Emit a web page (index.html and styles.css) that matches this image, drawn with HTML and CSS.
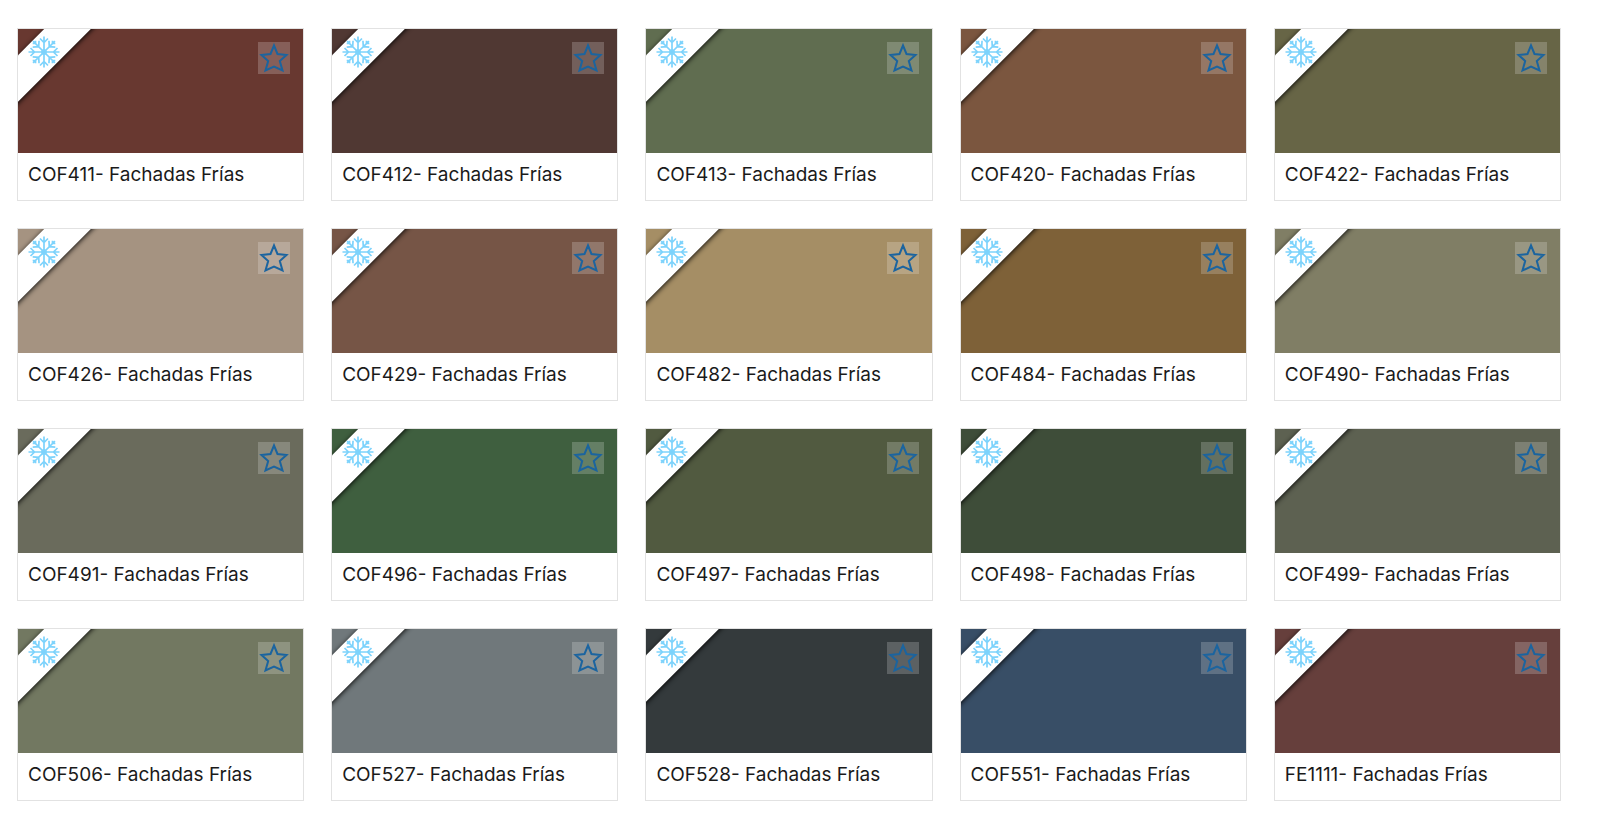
FILE: index.html
```
<!DOCTYPE html>
<html lang="es">
<head>
<meta charset="utf-8">
<meta name="viewport" content="width=device-width, initial-scale=1">
<title>Fachadas Frías</title>
<link rel="stylesheet" href="styles.css">
</head>
<body>

<svg class="sprite" aria-hidden="true">
  <symbol id="snowflake" viewBox="-16 -16 32 32">
    <g id="flake-pair">
      <path d="M0 0V-15.500M-4 -13.500L0 -9.500L4 -13.500"/>
      <g transform="rotate(45)">
        <path d="M0 0V-15.500M-4.500 -11.500L0 -7.500L4.500 -11.500M-2 -14L0 -12L2 -14"/>
      </g>
    </g>
    <use href="#flake-pair" transform="rotate(90)"/>
    <use href="#flake-pair" transform="rotate(180)"/>
    <use href="#flake-pair" transform="rotate(270)"/>
    <circle r="2"/>
  </symbol>
  <symbol id="star" viewBox="0 0 32 32">
    <path d="M16 3.500L19.500 12L28.500 13L21.800 19L24.500 28.500L16 24.500L7.500 28.500L10.200 19L3.500 13L12.500 12Z"/>
  </symbol>
</svg>

<main class="color-grid" id="colors"></main>

<template id="color-template">
  <article class="color-card">
    <div class="swatch">
      <span class="ribbon"></span>
      <svg class="snowflake" role="img" aria-label="Fachada fría"><use href="#snowflake"/></svg>
      <button class="favorite" type="button">
        <svg><use href="#star"/></svg>
      </button>
    </div>
    <p class="color-name"></p>
  </article>
</template>

<script src="colors.js"></script>
</body>
</html>
```
FILE: colors.js
```
var colors = [
  { code: "COF411", hex: "#683830" },
  { code: "COF412", hex: "#503833" },
  { code: "COF413", hex: "#606d50" },
  { code: "COF420", hex: "#7b563f" },
  { code: "COF422", hex: "#676546" },
  { code: "COF426", hex: "#a59381" },
  { code: "COF429", hex: "#765546" },
  { code: "COF482", hex: "#a58e65" },
  { code: "COF484", hex: "#7e6138" },
  { code: "COF490", hex: "#807e65" },
  { code: "COF491", hex: "#6a6b5c" },
  { code: "COF496", hex: "#3f5f3f" },
  { code: "COF497", hex: "#515a40" },
  { code: "COF498", hex: "#3e4d39" },
  { code: "COF499", hex: "#5d6151" },
  { code: "COF506", hex: "#727861" },
  { code: "COF527", hex: "#70787b" },
  { code: "COF528", hex: "#343a3c" },
  { code: "COF551", hex: "#384e66" },
  { code: "FE1111", hex: "#663f3c" }
];

var grid = document.getElementById("colors");
var template = document.getElementById("color-template");

for (var i = 0; i < colors.length; i++) {
  var clone = template.content.cloneNode(true);
  var button = clone.querySelector(".favorite");
  clone.querySelector(".swatch").style.backgroundColor = colors[i].hex;
  clone.querySelector(".color-name").textContent = colors[i].code + "- Fachadas Frías";
  button.setAttribute("aria-label", "Favorito " + colors[i].code);
  button.setAttribute("aria-pressed", "false");
  button.addEventListener("click", function() {
    var pressed = this.getAttribute("aria-pressed") == "true";
    this.setAttribute("aria-pressed", String(!pressed));
  });
  grid.appendChild(clone);
}
```
FILE: styles.css
```
* {
  box-sizing: border-box;
}

body {
  margin: 0;
  background-color: white;
  color: #1a1a1a;
  font-family: Inter, "Liberation Sans", sans-serif;
}

.sprite {
  position: absolute;
  width: 0;
  height: 0;
}

.color-grid {
  display: grid;
  grid-template-columns: repeat(5, 1fr);
  gap: 27px;
  padding: 28px 39px 22px 17px;
}

.color-card {
  border: 1px solid #e2e2e2;
}

.swatch {
  position: relative;
  height: 124px;
  overflow: hidden;
}

/* diagonal band over the top left corner */
.ribbon {
  position: absolute;
  top: 8px;
  left: -35px;
  width: 120px;
  height: 33px;
  background-color: white;
  box-shadow: 0 1px 5px rgba(0, 0, 0, 0.9);
  transform: rotate(-45deg);
}

.snowflake {
  position: absolute;
  top: 7px;
  left: 10px;
  width: 32px;
  height: 32px;
  fill: none;
  stroke: #7dd3fc;
  stroke-width: 1.7;
}

.favorite {
  position: absolute;
  top: 13px;
  right: 13px;
  width: 32px;
  height: 32px;
  padding: 0;
  border: 0;
  background-color: rgba(255, 255, 255, 0.2);
  cursor: pointer;
}

.favorite svg {
  display: block;
  width: 32px;
  height: 32px;
  fill: none;
  stroke: #1b649f;
  stroke-width: 2;
}

.favorite[aria-pressed="true"] svg {
  fill: #1b649f;
}

.color-name {
  margin: 0;
  padding: 8px 10px 11px;
  font-size: 19px;
  line-height: 28px;
}

@media (max-width: 1200px) {
  .color-grid {
    grid-template-columns: repeat(3, 1fr);
  }
}

@media (max-width: 760px) {
  .color-grid {
    grid-template-columns: 1fr;
  }
}
```
